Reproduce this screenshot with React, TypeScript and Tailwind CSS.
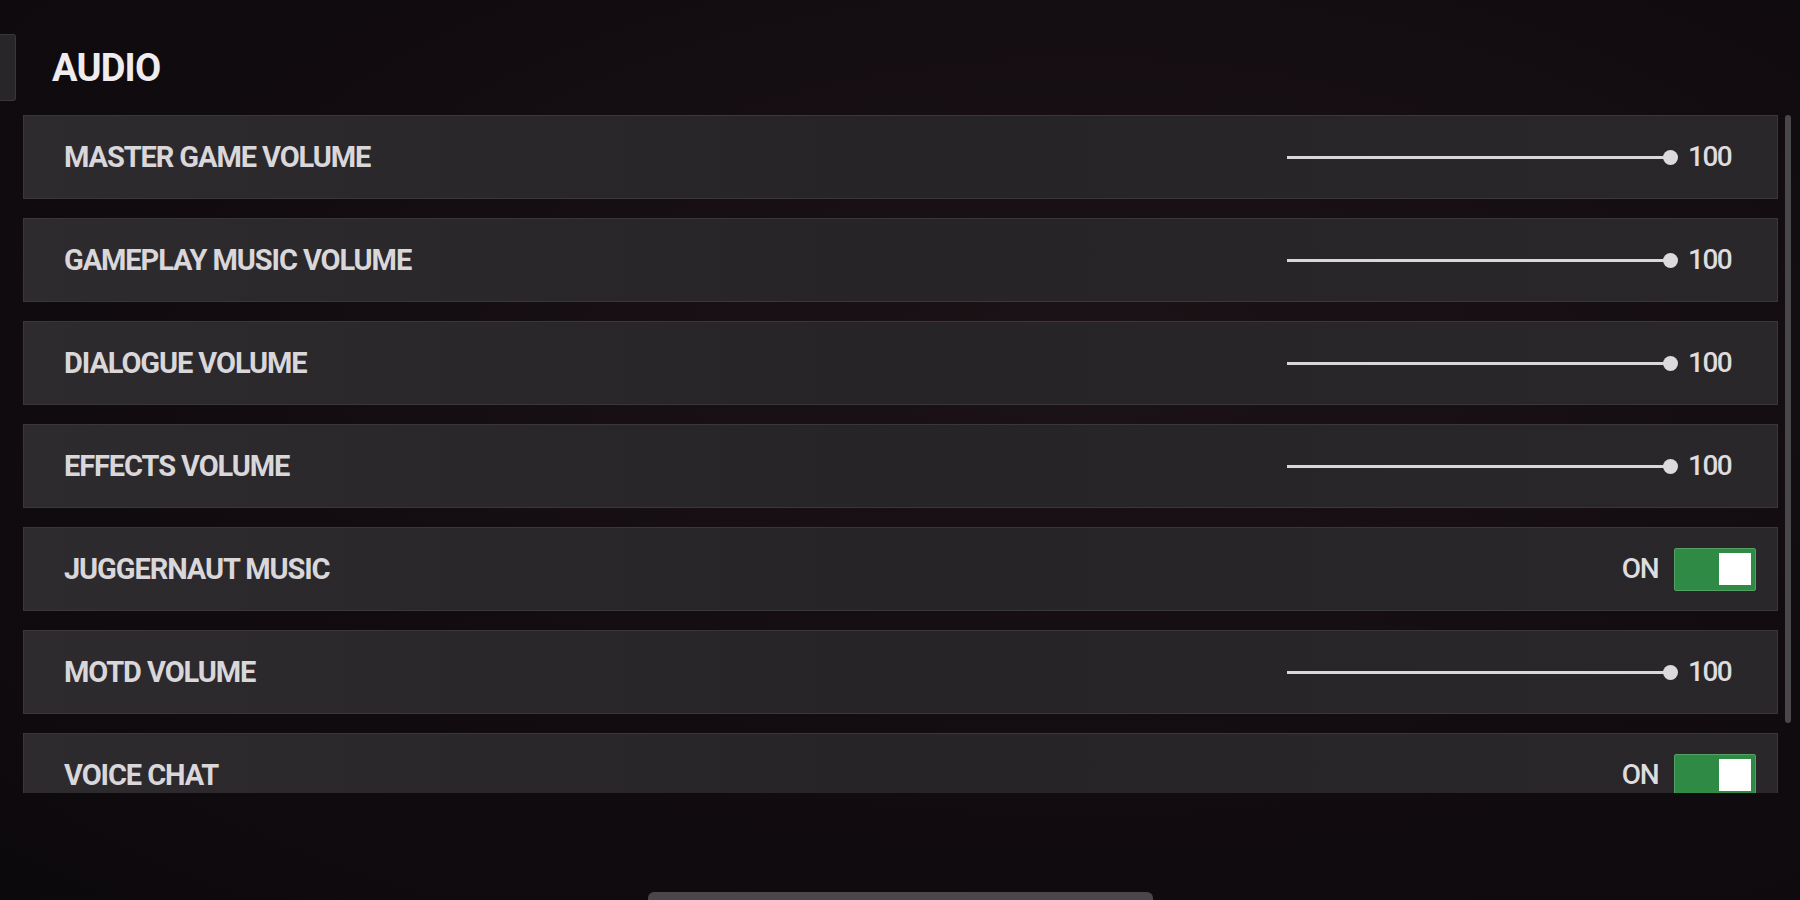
type Setting = {
  label: string;
  kind: 'slider' | 'toggle';
  value: number | string;
};

const settings: Setting[] = [
  { label: 'MASTER GAME VOLUME', kind: 'slider', value: 100 },
  { label: 'GAMEPLAY MUSIC VOLUME', kind: 'slider', value: 100 },
  { label: 'DIALOGUE VOLUME', kind: 'slider', value: 100 },
  { label: 'EFFECTS VOLUME', kind: 'slider', value: 100 },
  { label: 'JUGGERNAUT MUSIC', kind: 'toggle', value: 'ON' },
  { label: 'MOTD VOLUME', kind: 'slider', value: 100 },
  { label: 'VOICE CHAT', kind: 'toggle', value: 'ON' },
];

function Slider({ value }: { value: number }) {
  return (
    <div className="flex items-center">
      <div className="relative h-[3px] w-[384px] bg-[#d9d7d9]">
        <div className="absolute right-[-7px] top-[-6px] h-[15px] w-[15px] rounded-full bg-[#dcdadc]" />
      </div>
      <span className="ml-[17px] w-[41px] text-[28px] font-medium leading-none tracking-[-1.5px] text-[#dedcde]">
        {value}
      </span>
    </div>
  );
}

function Toggle({ value }: { value: string }) {
  return (
    <div className="flex items-center gap-[16px]">
      <span className="text-[28px] font-medium leading-none tracking-[-1.5px] text-[#dedcde]">{value}</span>
      <div className="flex h-[43px] w-[82px] items-center justify-end rounded-[2px] border border-[#55a064] bg-[#2e8a45] pr-[4px]">
        <div className="h-[32px] w-[32px] bg-white" />
      </div>
    </div>
  );
}

function Row({ s }: { s: Setting }) {
  return (
    <div
      className={`flex h-[84px] shrink-0 items-center justify-between border border-[#3a373b] bg-gradient-to-r from-[#2e2b2f] via-[#272428] to-[#2a272b] pl-[40px] ${
        s.kind === 'slider' ? 'pr-[48px]' : 'pr-[21px]'
      }`}
    >
      <span className="text-[29px] font-bold leading-none tracking-[-1.1px] text-[#d9d7da]">{s.label}</span>
      {s.kind === 'slider' ? <Slider value={s.value as number} /> : <Toggle value={s.value as string} />}
    </div>
  );
}

export default function App() {
  return (
    <div
      className="relative h-[900px] w-[1800px] overflow-hidden bg-[radial-gradient(ellipse_at_60%_40%,#1c1217_0%,#120c10_55%,#0c090d_100%)]"
      style={{ fontFamily: 'Roboto, "Liberation Sans", sans-serif' }}
    >
      {/* Header */}
      <div className="mt-[34px] flex h-[67px] items-center">
        <div className="h-[67px] w-[16px] rounded-r-[3px] border-y border-r border-[#3a373b] bg-[#29262a]" />
        <h1 className="ml-[36px] text-[38px] font-bold leading-none tracking-[-0.8px] text-[#efecef]">AUDIO</h1>
      </div>

      {/* List */}
      <div className="mt-[14px] flex gap-[7px] pl-[23px]">
        <div className="flex h-[678px] w-[1755px] flex-col gap-[19px] overflow-hidden">
          {settings.map((s) => (
            <Row key={s.label} s={s} />
          ))}
        </div>
        <div className="h-[608px] w-[6px] rounded-full bg-[#4a474b]" />
      </div>

      {/* Bottom handle */}
      <div className="mx-auto mt-[99px] h-[12px] w-[505px] rounded-t-[6px] bg-[#4a464c]" />
    </div>
  );
}
